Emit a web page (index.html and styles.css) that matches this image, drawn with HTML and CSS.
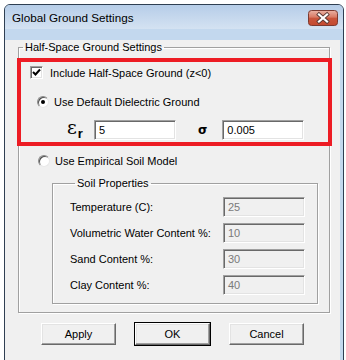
FILE: index.html
```
<!doctype html>
<html>
<head>
<meta charset="UTF-8">
<title>Global Ground Settings</title>
<link rel="stylesheet" href="styles.css">
</head>
<body>
<div class="window">
  <div class="titlebar">
    <span class="title">Global Ground Settings</span>
    <span class="close">
      <svg width="30" height="16" viewBox="0 0 30 16">
        <defs>
          <linearGradient id="closeBg" x1="0" y1="0" x2="0" y2="1">
            <stop offset="0" stop-color="#eab2a4"/>
            <stop offset="0.45" stop-color="#d97a64"/>
            <stop offset="0.5" stop-color="#c9553c"/>
            <stop offset="1" stop-color="#c44a30"/>
          </linearGradient>
        </defs>
        <rect x="0.5" y="0.5" width="29" height="15" rx="3" fill="url(#closeBg)" stroke="#7d3a30"/>
        <path d="M11 4.5 L19 11.5 M19 4.5 L11 11.5" stroke="#5a3a35" stroke-width="4" stroke-linecap="square"/>
        <path d="M11 4.5 L19 11.5 M19 4.5 L11 11.5" stroke="#ffffff" stroke-width="2.2" stroke-linecap="square"/>
      </svg>
    </span>
  </div>
  <div class="client">
    <fieldset class="group main-group">
      <legend>Half-Space Ground Settings</legend>
      <div class="highlight">
        <div class="option check-row">
          <span class="checkbox">
            <svg width="9" height="9" viewBox="0 0 9 9"><path d="M1 4 L3.5 6.5 L8 1.5" fill="none" stroke="#000" stroke-width="2"/></svg>
          </span>
          Include Half-Space Ground (z&lt;0)
        </div>
        <div class="option radio-row">
          <span class="radio on"></span>
          Use Default Dielectric Ground
        </div>
        <div class="param-row">
          <span class="eps">&#949;<span class="sub">r</span></span>
          <div class="edit">5</div>
          <span class="sigma">&#963;</span>
          <div class="edit">0.005</div>
        </div>
      </div>
      <div class="option soil-radio">
        <span class="radio"></span>
        Use Empirical Soil Model
      </div>
      <fieldset class="group soil">
        <legend>Soil Properties</legend>
        <div class="field"><span class="field-label">Temperature (C):</span><div class="edit disabled">25</div></div>
        <div class="field"><span class="field-label">Volumetric Water Content %:</span><div class="edit disabled">10</div></div>
        <div class="field"><span class="field-label">Sand Content %:</span><div class="edit disabled">30</div></div>
        <div class="field"><span class="field-label">Clay Content %:</span><div class="edit disabled">40</div></div>
      </fieldset>
    </fieldset>
    <div class="buttons">
      <div class="button">Apply</div>
      <div class="button default">OK</div>
      <div class="button">Cancel</div>
    </div>
  </div>
</div>
</body>
</html>
```
FILE: styles.css
```
html, body {
  margin: 0;
  background: #ffffff;
}

body {
  font-family: "Liberation Sans", Arial, sans-serif;
  font-size: 11px;
  color: #000;
}

/* window frame */
.window {
  margin: 4px 0 0 4px;
  width: 335px;
  border: 1px solid #2f3f52;
  border-radius: 6px 6px 0 0;
  background: #c3d8ee;
  padding: 0 3px 3px 0;
}

.titlebar {
  height: 24px;
  margin-right: -3px;
  display: flex;
  align-items: center;
  justify-content: space-between;
  padding: 0 5px 0 7px;
  border-radius: 5px 5px 0 0;
  background: linear-gradient(#b6cde8, #d4e2f2);
}

.title {
  font-size: 11.7px;
  color: #000;
  padding-top: 1px;
}

.close {
  display: flex;
  margin-top: 1px;
}

.client {
  background: #f0f0f0;
  padding: 0 0 8px 0;
  height: 315px;
}

/* group boxes */
.group {
  margin: 0;
  padding: 0;
  border: 1px solid #a0a0a0;
  box-shadow: inset 1px 1px #fff, 1px 1px #fff;
  min-width: 0;
}

.group legend {
  padding: 0 2px;
  line-height: 14px;
}

.main-group {
  margin: 11px 10px 0 13px;
  padding-bottom: 8px;
}

.main-group > legend {
  margin-left: 4px;
}

.highlight {
  margin: 4px -3px 0 -2px;
  border: 4px solid #ed1c24;
  padding: 4px 0 2px 9px;
}

.option {
  display: flex;
  align-items: center;
  height: 13px;
}

.checkbox {
  width: 11px;
  height: 11px;
  margin-right: 7px;
  background: #fff;
  border: 1px solid;
  border-color: #a0a0a0 #fff #fff #a0a0a0;
  box-shadow: inset 1px 1px #696969, inset -1px -1px #e3e3e3;
  display: flex;
  align-items: center;
  justify-content: center;
}

.radio-row {
  margin-top: 16px;
  padding-left: 7px;
}

.radio {
  width: 12px;
  height: 12px;
  margin-right: 5px;
  border-radius: 50%;
  background: #fff;
  box-sizing: border-box;
  border: 1px solid;
  border-color: #8a8a8a #e8e8e8 #e8e8e8 #8a8a8a;
  box-shadow: inset 1px 1px #505050;
  position: relative;
}

.radio.on:after {
  content: "";
  position: absolute;
  left: 3px;
  top: 3px;
  width: 4px;
  height: 4px;
  border-radius: 50%;
  background: #000;
}

.param-row {
  display: flex;
  align-items: center;
  height: 20px;
  margin-top: 12px;
  padding-left: 37px;
}

.eps {
  font-family: "DejaVu Serif", serif;
  font-size: 19px;
  width: 27px;
  line-height: 20px;
  margin-top: -4px;
}

.eps .sub {
  font-family: "Liberation Sans", sans-serif;
  font-weight: bold;
  font-size: 13px;
  margin-left: 1px;
  position: relative;
  top: 4px;
}

.sigma {
  font-family: "DejaVu Sans", sans-serif;
  font-weight: bold;
  font-size: 12px;
  margin: 0 15px 0 22px;
}

.edit {
  width: 76px;
  height: 16px;
  line-height: 16px;
  padding: 1px 0 1px 4px;
  background: #fff;
  border: 1px solid;
  border-color: #a0a0a0 #fff #fff #a0a0a0;
  box-shadow: inset 1px 1px #696969, inset -1px -1px #e3e3e3;
}

.edit.disabled {
  background: #f0f0f0;
  color: #7a7a7a;
}

.soil-radio {
  margin-top: 8px;
  padding-left: 19px;
}

.soil {
  margin: 9px 11px 0 33px;
  padding: 7px 12px 8px 17px;
}

.soil > legend {
  margin-left: 5px;
}

.field {
  display: flex;
  align-items: center;
  justify-content: space-between;
  height: 20px;
  margin-bottom: 6px;
}

.field:last-child {
  margin-bottom: 0;
}

/* buttons */
.buttons {
  display: flex;
  gap: 19px;
  margin: 10px 0 0 36px;
}

.button {
  width: 73px;
  height: 20px;
  line-height: 20px;
  text-align: center;
  background: #f0f0f0;
  border: 1px solid;
  border-color: #fff #696969 #696969 #fff;
  box-shadow: inset -1px -1px #a0a0a0, inset 1px 1px #e3e3e3;
}

.button.default {
  outline: 1px solid #000;
}
```
